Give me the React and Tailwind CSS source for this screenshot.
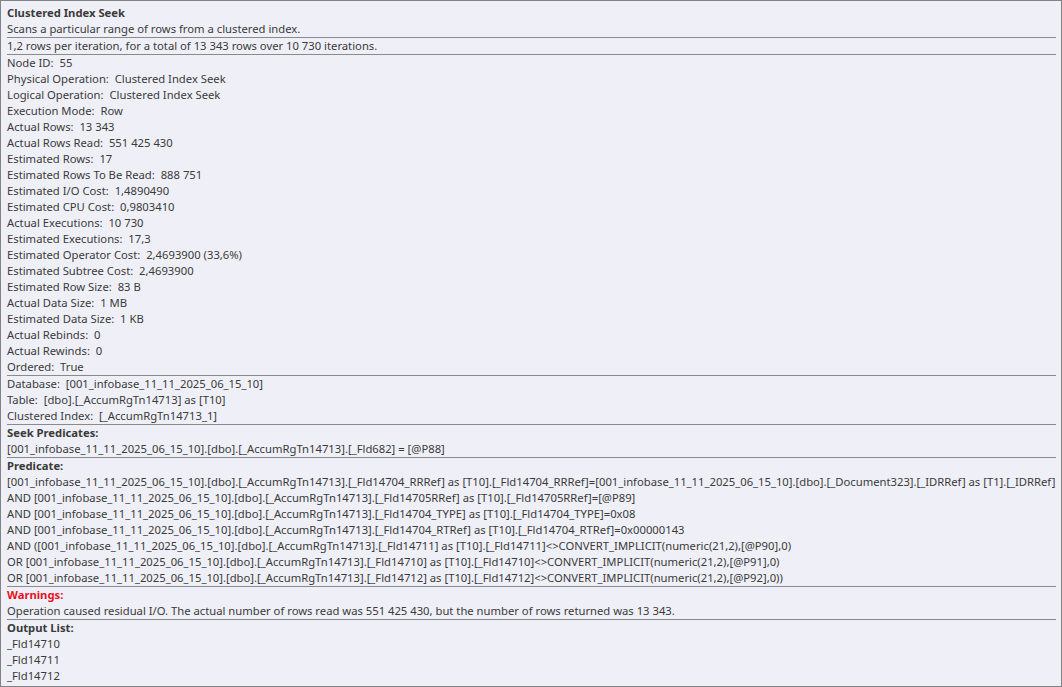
const Row = ({ label, value }) => (
  <div className="h-4 leading-4 whitespace-nowrap">
    {label}:&nbsp; {value}
  </div>
);

const Section = ({ children, last = false }) => (
  <div className={last ? "" : "border-b border-[#8a8a8a]"}>{children}</div>
);

const Head = ({ children, red = false }) => (
  <div className={`h-4 leading-4 font-bold whitespace-nowrap ${red ? "text-[#e81123]" : ""}`}>
    {children}
  </div>
);

const Line = ({ children }) => (
  <div className="h-4 leading-4 whitespace-nowrap">{children}</div>
);

const props = [
  ["Node ID", "55"],
  ["Physical Operation", "Clustered Index Seek"],
  ["Logical Operation", "Clustered Index Seek"],
  ["Execution Mode", "Row"],
  ["Actual Rows", "13 343"],
  ["Actual Rows Read", "551 425 430"],
  ["Estimated Rows", "17"],
  ["Estimated Rows To Be Read", "888 751"],
  ["Estimated I/O Cost", "1,4890490"],
  ["Estimated CPU Cost", "0,9803410"],
  ["Actual Executions", "10 730"],
  ["Estimated Executions", "17,3"],
  ["Estimated Operator Cost", "2,4693900 (33,6%)"],
  ["Estimated Subtree Cost", "2,4693900"],
  ["Estimated Row Size", "83 B"],
  ["Actual Data Size", "1 MB"],
  ["Estimated Data Size", "1 KB"],
  ["Actual Rebinds", "0"],
  ["Actual Rewinds", "0"],
  ["Ordered", "True"],
];

const db = "[001_infobase_11_11_2025_06_15_10]";
const tbl = `${db}.[dbo].[_AccumRgTn14713]`;

const predicate = [
  `${tbl}.[_Fld14704_RRRef] as [T10].[_Fld14704_RRRef]=${db}.[dbo].[_Document323].[_IDRRef] as [T1].[_IDRRef]`,
  `AND ${tbl}.[_Fld14705RRef] as [T10].[_Fld14705RRef]=[@P89]`,
  `AND ${tbl}.[_Fld14704_TYPE] as [T10].[_Fld14704_TYPE]=0x08`,
  `AND ${tbl}.[_Fld14704_RTRef] as [T10].[_Fld14704_RTRef]=0x00000143`,
  `AND (${tbl}.[_Fld14711] as [T10].[_Fld14711]<>CONVERT_IMPLICIT(numeric(21,2),[@P90],0)`,
  `OR ${tbl}.[_Fld14710] as [T10].[_Fld14710]<>CONVERT_IMPLICIT(numeric(21,2),[@P91],0)`,
  `OR ${tbl}.[_Fld14712] as [T10].[_Fld14712]<>CONVERT_IMPLICIT(numeric(21,2),[@P92],0))`,
];

export default function App() {
  return (
    <div
      className="w-[1062px] h-[687px] overflow-hidden bg-[#eff0f7] border border-[#828282] pt-1 pl-1.5 pr-[5px] text-[11.25px] text-[#3a3a3a]"
      style={{ fontFamily: "'Noto Sans', sans-serif" }}
    >
      <Section>
        <Head>Clustered Index Seek</Head>
        <Line>Scans a particular range of rows from a clustered index.</Line>
      </Section>
      <Section>
        <Line>1,2 rows per iteration, for a total of 13 343 rows over 10 730 iterations.</Line>
      </Section>
      <Section>
        {props.map(([l, v]) => (
          <Row key={l} label={l} value={v} />
        ))}
      </Section>
      <Section>
        <Row label="Database" value={db} />
        <Row label="Table" value="[dbo].[_AccumRgTn14713] as [T10]" />
        <Row label="Clustered Index" value="[_AccumRgTn14713_1]" />
      </Section>
      <Section>
        <Head>Seek Predicates:</Head>
        <Line>{`${tbl}.[_Fld682] = [@P88]`}</Line>
      </Section>
      <Section>
        <Head>Predicate:</Head>
        {predicate.map((p) => (
          <Line key={p}>{p}</Line>
        ))}
      </Section>
      <Section>
        <Head red>Warnings:</Head>
        <Line>
          Operation caused residual I/O. The actual number of rows read was 551 425 430, but the number of rows returned was 13 343.
        </Line>
      </Section>
      <Section last>
        <Head>Output List:</Head>
        <Line>_Fld14710</Line>
        <Line>_Fld14711</Line>
        <Line>_Fld14712</Line>
      </Section>
    </div>
  );
}
